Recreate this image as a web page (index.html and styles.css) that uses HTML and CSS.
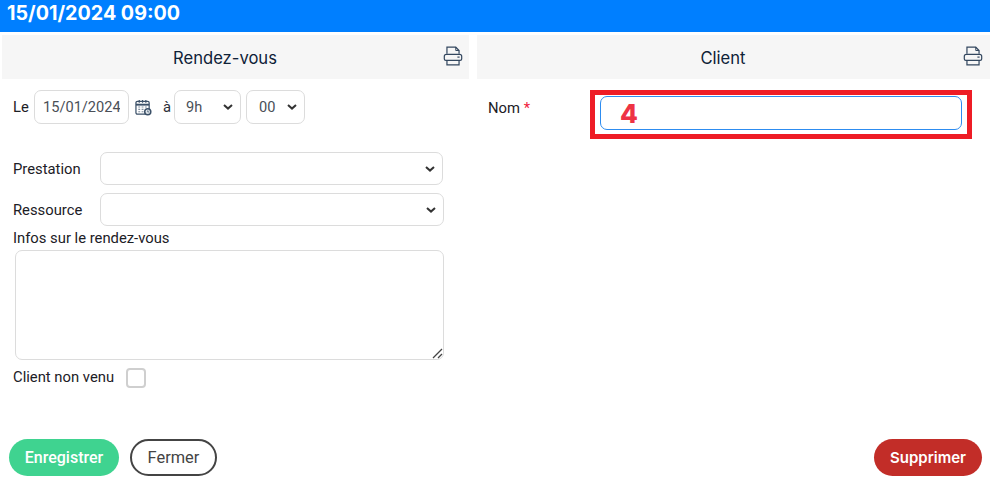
FILE: index.html
```html
<!DOCTYPE html>
<html lang="fr">
<head>
<meta charset="utf-8">
<title>Rendez-vous</title>
<link rel="stylesheet" href="styles.css">
</head>
<body>
<header class="topbar">15/01/2024 09:00</header>
<main class="columns">
  <section class="panel panel-left">
    <div class="panel-head">
      <h2 class="panel-title">Rendez-vous</h2>
      <svg class="print" viewBox="0 0 20 20" width="22" height="22" fill="none"><path d="M4.500 8V2h8l3 3v3" stroke="#33475f" stroke-width="1.100"/><path d="M12.500 2v3h3" stroke="#33475f" stroke-width=".9"/><path d="M4 8.500h12c1.200 0 1.900.8 1.900 1.800v2.400c0 .8-.7 1.300-1.400 1.300H3.500c-.7 0-1.400-.5-1.400-1.300v-2.400C2.100 9.300 2.800 8.500 4 8.500z" stroke="#33475f" stroke-width="1.100"/><path d="M4.500 14.500v3.500h11v-3.500" stroke="#33475f" stroke-width="1.100"/><path d="M14 11h2" stroke="#33475f" stroke-width="1.100"/></svg>
    </div>
    <div class="date-row">
      <span class="label label-le">Le</span>
      <input class="field date-input" type="text" value="15/01/2024">
      <svg class="cal" viewBox="0 0 18 18" width="17" height="17" fill="none"><rect x="1" y="2.500" width="14" height="13.500" rx="1.500" stroke="#3b5068" stroke-width="1.300"/><path d="M1 6h14" stroke="#3b5068" stroke-width="2"/><path d="M4.500 1v3M8 1v3M11.500 1v3" stroke="#3b5068" stroke-width="1.300"/><path d="M3.500 8.500h2M7 8.500h2M10.500 8.500h2M3.500 11h2M7 11h2M3.500 13.500h2M7 13.500h2" stroke="#7d8b9b" stroke-width="1.200"/><circle cx="13.500" cy="13.500" r="4" fill="#3b5068"/><circle cx="13.500" cy="13.500" r="2.400" fill="#dfe5ea"/><path d="M13.500 12v1.700h1.300" stroke="#3b5068" stroke-width=".8"/></svg>
      <span class="label-a">à</span>
      <select class="field sel-hour"><option>9h</option></select>
      <select class="field sel-min"><option>00</option></select>
    </div>
    <div class="form-row row-prest">
      <label class="label row-label">Prestation</label>
      <select class="field wide wide-a"><option></option></select>
    </div>
    <div class="form-row row-res">
      <label class="label row-label">Ressource</label>
      <select class="field wide wide-b"><option></option></select>
    </div>
    <label class="label infos-label">Infos sur le rendez-vous</label>
    <textarea class="field infos"></textarea>
    <div class="check-row">
      <span class="label check-label">Client non venu</span>
      <span class="check"></span>
    </div>
  </section>
  <section class="panel panel-right">
    <div class="panel-head">
      <h2 class="panel-title">Client</h2>
      <svg class="print print-right" viewBox="0 0 20 20" width="22" height="22" fill="none"><path d="M4.500 8V2h8l3 3v3" stroke="#33475f" stroke-width="1.100"/><path d="M12.500 2v3h3" stroke="#33475f" stroke-width=".9"/><path d="M4 8.500h12c1.200 0 1.900.8 1.900 1.800v2.400c0 .8-.7 1.300-1.400 1.300H3.500c-.7 0-1.400-.5-1.400-1.300v-2.400C2.100 9.300 2.800 8.500 4 8.500z" stroke="#33475f" stroke-width="1.100"/><path d="M4.500 14.500v3.500h11v-3.500" stroke="#33475f" stroke-width="1.100"/><path d="M14 11h2" stroke="#33475f" stroke-width="1.100"/></svg>
    </div>
    <div class="nom-row">
      <label class="label nom-label">Nom <span class="req">*</span></label>
      <div class="callout">
        <input class="nom-input" type="text">
        <span class="callout-num">4</span>
      </div>
    </div>
  </section>
</main>
<footer class="actions">
  <button class="btn btn-save">Enregistrer</button>
  <button class="btn btn-close">Fermer</button>
  <button class="btn btn-delete">Supprimer</button>
</footer>
</body>
</html>
```
FILE: styles.css
```css
* { box-sizing: border-box; }
html, body { margin: 0; height: 100%; }
body {
  width: 990px;
  height: 483px;
  overflow: hidden;
  background: #fff;
  font-family: Roboto, "Liberation Sans", sans-serif;
  font-size: 14px;
  color: #2b3038;
  display: flex;
  flex-direction: column;
}
.topbar {
  height: 32px;
  flex: none;
  background: #007fff;
  color: #fff;
  font-family: Inter, "Liberation Sans", sans-serif;
  font-weight: 700;
  font-size: 19.7px;
  line-height: 26px;
  padding-left: 7px;
}
.columns {
  flex: 1;
  display: flex;
  gap: 8px;
  padding: 3px 0 0 2px;
}
.panel-left { width: 467px; flex: none; }
.panel-right { flex: 1; }
.panel-head {
  height: 44px;
  background: #f6f6f6;
  position: relative;
  display: flex;
  align-items: center;
  justify-content: center;
  padding-right: 21px;
}
.panel-title {
  margin: 0;
  font-family: Inter, "Liberation Sans", sans-serif;
  font-weight: 400;
  font-size: 16.6px;
  line-height: 22px;
  padding-top: 1px;
  color: #0f2238;
}
.print { position: absolute; left: 440px; top: 10px; }
.print-right { left: 485px; }
.label { font-size: 14.8px; font-weight: 400; color: #1c2026; }
.field {
  border: 1px solid #dcdcdc;
  border-radius: 7px;
  background-color: #fff;
  font-family: Roboto, "Liberation Sans", sans-serif;
  font-size: 14.6px;
  color: #4a4f57;
  outline: none;
}
select.field {
  appearance: none;
  background-image: url("data:image/svg+xml,%3Csvg xmlns='http://www.w3.org/2000/svg' width='10' height='6' viewBox='0 0 10 6'%3E%3Cpath d='M1 1l4 3.600L9 1' fill='none' stroke='%23333' stroke-width='2'/%3E%3C/svg%3E");
  background-repeat: no-repeat;
  background-position: right 7px center;
}
.date-row {
  display: flex;
  align-items: center;
  height: 34px;
  margin: 11px 0 0 11px;
}
.label-le { width: 21px; flex: none; }
.date-input { width: 95px; height: 34px; padding: 0 8px; }
.cal { margin-left: 6px; flex: none; }
.label-a { width: 8px; flex: none; margin: 0 3px 0 11px; font-size: 14.8px; }
.sel-hour { width: 67px; height: 34px; padding-left: 11px; }
.sel-min { width: 59px; height: 34px; margin-left: 5px; padding-left: 12px; }
.form-row { display: flex; align-items: center; margin-left: 11px; }
.row-label { width: 87px; flex: none; }
.row-prest { margin-top: 28px; }
.row-res { margin-top: 8px; }
.wide { height: 33px; }
.wide-a { width: 343px; }
.wide-b { width: 344px; }
.infos-label { display: block; margin: 4px 0 0 11px; line-height: 16px; }
.infos {
  display: block;
  width: 429px;
  height: 110px;
  margin: 4px 0 0 13px;
}
.infos::-webkit-resizer {
  background-image: url("data:image/svg+xml,%3Csvg xmlns='http://www.w3.org/2000/svg' width='12' height='12' viewBox='0 0 12 12'%3E%3Cpath d='M2 11L11 2M7 11l4-4' stroke='%23444' stroke-width='1.300' fill='none'/%3E%3C/svg%3E");
  background-repeat: no-repeat;
  background-position: right bottom;
}
.check-row { display: flex; align-items: center; margin: 8px 0 0 11px; height: 20px; }
.check-label { line-height: 18px; padding-bottom: 2px; }
.check {
  width: 20px;
  height: 20px;
  margin-left: 12px;
  border: 2px solid #cfcfcf;
  border-radius: 4px;
}
.nom-row { display: flex; margin-top: 11px; }
.nom-label { width: 102px; margin-left: 11px; flex: none; line-height: 16px; padding-top: 10px; }
.req { color: #f01c3c; }
.callout {
  position: relative;
  width: 382px;
  height: 49px;
  border: 5px solid #ee1c25;
  padding: 1px 5px;
}
.nom-input {
  display: block;
  width: 362px;
  height: 34px;
  border: 1px solid #2d8cf0;
  border-radius: 7px;
  outline: none;
}
.callout-num {
  position: absolute;
  left: 25px;
  top: 4px;
  font-family: Inter, "Liberation Sans", sans-serif;
  font-weight: 800;
  font-size: 26px;
  line-height: 30px;
  color: #ee3344;
}
.actions {
  flex: none;
  height: 44px;
  display: flex;
  align-items: flex-start;
  padding: 0 8px 0 9px;
}
.btn {
  height: 37px;
  border-radius: 19px;
  font-size: 16px;
  font-family: Inter, "Liberation Sans", sans-serif;
  padding: 0;
}
.btn-save {
  width: 110px;
  border: 0;
  background: #3fd390;
  color: #fff;
  font-family: Roboto, "Liberation Sans", sans-serif;
  font-weight: 500;
}
.btn-close {
  width: 87px;
  margin-left: 11px;
  border: 2px solid #444;
  background: #fff;
  color: #444;
  font-family: Roboto, "Liberation Sans", sans-serif;
  font-weight: 400;
  font-size: 16.4px;
}
.btn-delete {
  width: 108px;
  margin-left: auto;
  border: 0;
  background: #c22d28;
  color: #fff;
  font-weight: 600;
  font-size: 15px;
}
```
